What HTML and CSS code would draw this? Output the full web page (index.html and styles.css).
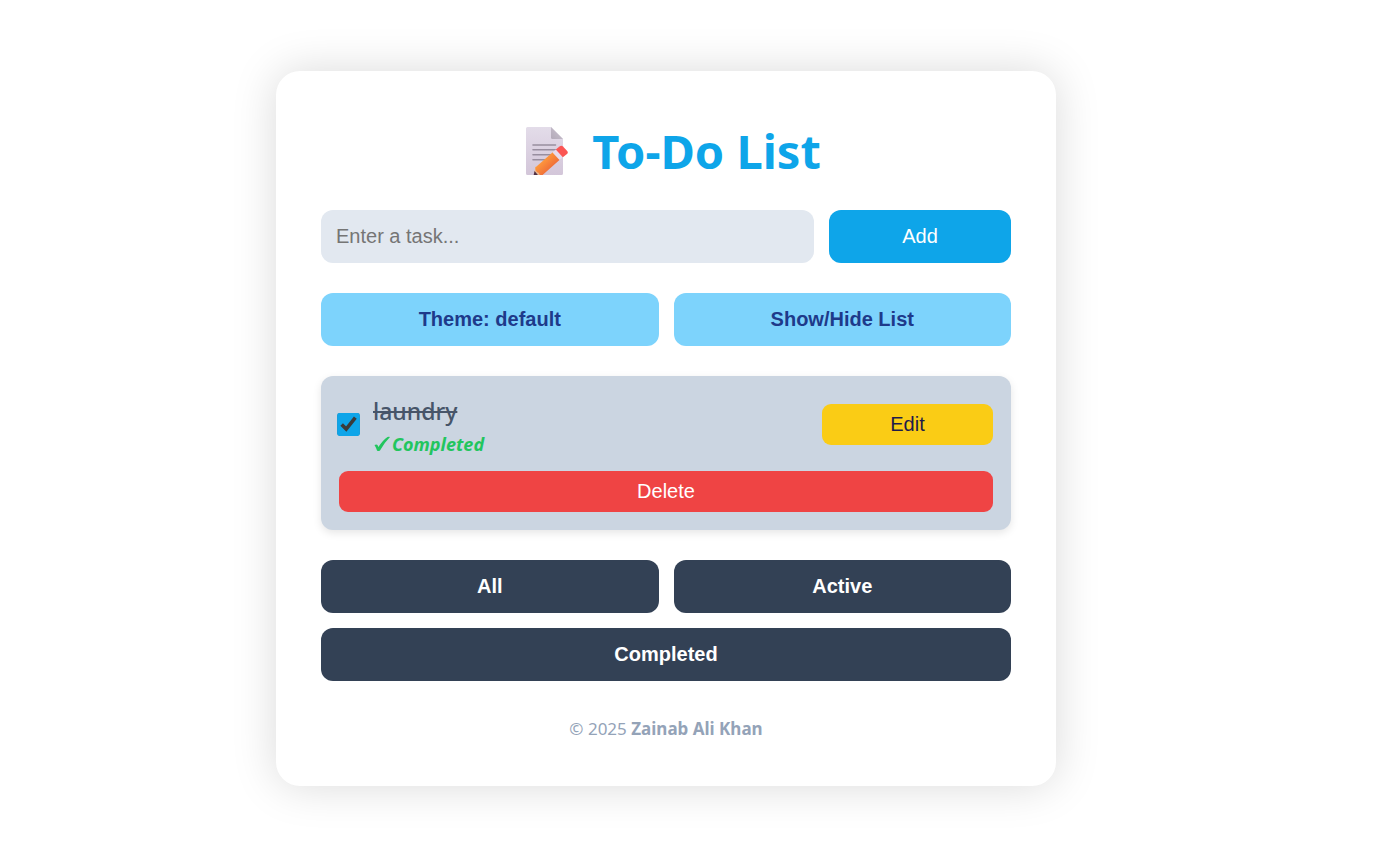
FILE: index.html
```html
<!DOCTYPE html>
<html lang="en">
<head>
<meta charset="utf-8">
<meta name="viewport" content="width=device-width, initial-scale=1">
<title>To-Do List</title>
<link rel="stylesheet" href="styles.css">
</head>
<body>
<main class="card">
  <h1 class="title">
    <svg class="title-icon" viewBox="0 0 42 48" aria-hidden="true">
      <defs>
        <linearGradient id="paper" x1="0" y1="0" x2="0" y2="1"><stop offset="0" stop-color="#e3dce9"/><stop offset="1" stop-color="#d3c6d9"/></linearGradient>
        <linearGradient id="fold" x1="0" y1="1" x2="1" y2="0"><stop offset="0" stop-color="#b3aab9"/><stop offset="1" stop-color="#cdc5d1"/></linearGradient>
        <linearGradient id="pencil" x1="0.300" y1="0.300" x2="0.700" y2="0.700"><stop offset="0" stop-color="#ff9b3d"/><stop offset="1" stop-color="#ee6a38"/></linearGradient>
        <clipPath id="sheet"><rect width="42" height="48"/></clipPath>
      </defs>
      <path d="M1.500 0H25l12 12v34.500a1.500 1.500 0 0 1-1.500 1.500h-34A1.500 1.500 0 0 1 0 46.500v-45A1.500 1.500 0 0 1 1.500 0z" fill="url(#paper)"/>
      <path d="M25 0l12 12H26.500A1.500 1.500 0 0 1 25 10.500z" fill="url(#fold)"/>
      <path d="M7 18h22.500M7 22.800h22.500M7 27.800h20M7 32.800h13" stroke="#988e9f" stroke-width="1.600" stroke-linecap="round"/>
      <g clip-path="url(#sheet)">
        <path d="M9.500 39.500L7.500 50h6l4-4z" fill="#eab58d"/>
        <path d="M8.500 44L7.300 50l5-1.500z" fill="#503044"/>
        <path d="M9.300 40.500L27 25l7 7.500L16 48.500q-2.500.500-3-2.500-3.500-1-3.700-5.500z" fill="url(#pencil)"/>
        <path d="M26.500 25.500l4-3.500 7 7.500-4 3.500z" fill="#e8dced"/>
        <path d="M29.800 22.600l3.700-3.200q1.900-1.500 3.500 0l4.200 4.500q1.300 1.800-.200 3.200L36.800 30.200z" fill="#fb5553"/>
      </g>
    </svg>
    <span>To-Do List</span>
  </h1>

  <form class="add-form">
    <input class="task-input" type="text" placeholder="Enter a task..." aria-label="Task">
    <button class="btn btn-add" type="button">Add</button>
  </form>

  <div class="button-row">
    <button class="btn btn-option" type="button">Theme: default</button>
    <button class="btn btn-option" type="button">Show/Hide List</button>
  </div>

  <ul class="task-list">
    <li class="task">
      <input class="task-check" type="checkbox" id="task-1" checked>
      <div class="task-body">
        <label class="task-name" for="task-1">laundry</label>
        <span class="task-status"><svg class="status-icon" viewBox="0 0 18 16" aria-hidden="true"><path d="M1.500 9q2-1 3 0l.900 2Q10 4 14.500 1q1.500-.500 2.500 0Q11 7 7 14.500q-1.800 1.200-3 0Q3 11.500 1.500 9z" fill="currentColor"/></svg>Completed</span>
      </div>
      <button class="btn-small btn-edit" type="button">Edit</button>
      <button class="btn-small btn-delete" type="button">Delete</button>
    </li>
  </ul>

  <div class="button-row">
    <button class="btn btn-filter" type="button">All</button>
    <button class="btn btn-filter" type="button">Active</button>
    <button class="btn btn-filter btn-wide" type="button">Completed</button>
  </div>

  <footer class="footer">© 2025 <strong>Zainab Ali Khan</strong></footer>
</main>
</body>
</html>
```
FILE: styles.css
```css
* {
  box-sizing: border-box;
}

body {
  margin: 0;
  min-height: 100vh;
  padding: 71px 94px 71px 30px;
  background: #fff;
  font-family: "Segoe UI", "Noto Sans", sans-serif;
}

.card {
  max-width: 780px;
  margin: 0 auto;
  padding: 45px;
  background: #fff;
  border-radius: 24px;
  box-shadow: 0 0 45px rgba(0, 0, 0, 0.15);
}

.title {
  display: flex;
  justify-content: center;
  align-items: center;
  gap: 24px;
  margin: 0 0 24px;
  padding-left: 15px;
  color: #0ea5e9;
  font-size: 47px;
  line-height: 70px;
  font-weight: 700;
}

.title-icon {
  width: 42px;
  height: 48px;
}

.add-form {
  display: flex;
  gap: 15px;
  margin-bottom: 30px;
}

.task-input,
.btn {
  height: 53px;
  border: none;
  border-radius: 12px;
  font-family: "Liberation Sans", Arial, sans-serif;
  font-size: 20px;
}

.task-input {
  flex: 1;
  min-width: 0;
  padding: 0 15px;
  background: #e2e8f0;
}

.btn-add {
  width: 182px;
  background: #0ea5e9;
  color: #fff;
}

.button-row {
  display: grid;
  grid-template-columns: 1fr 1fr;
  gap: 15px;
}

.btn-option {
  background: #7dd3fc;
  color: #1e3a8a;
  font-weight: 700;
}

.task-list {
  margin: 30px 0;
  padding: 0;
  list-style: none;
}

.task {
  display: grid;
  grid-template-columns: auto 1fr 171px;
  align-items: center;
  gap: 16px 15px;
  padding: 18px;
  background: #cbd5e1;
  border-radius: 12px;
  box-shadow: 0 3px 9px rgba(0, 0, 0, 0.1);
}

.task-check {
  width: 19px;
  height: 19px;
  margin: 0;
  transform: scale(1.2);
  accent-color: #0ea5e9;
}

.task-body {
  display: flex;
  flex-direction: column;
  gap: 4px;
}

.task-name {
  color: #475569;
  font-size: 23px;
  line-height: 35px;
  font-weight: 500;
  text-decoration: line-through;
}

.task-status {
  display: flex;
  align-items: center;
  gap: 1px;
  color: #22c55e;
  font-size: 18px;
  line-height: 22px;
  font-style: italic;
  font-weight: 700;
}

.status-icon {
  width: 18px;
  height: 16px;
}

.btn-small {
  height: 41px;
  border: none;
  border-radius: 9px;
  font-family: "Liberation Sans", Arial, sans-serif;
  font-size: 20px;
}

.btn-edit {
  background: #facc15;
  color: #1e1b4b;
}

.btn-delete {
  grid-column: 1 / -1;
  background: #ef4444;
  color: #fff;
}

.btn-filter {
  background: #334155;
  color: #fff;
  font-weight: 700;
}

.btn-wide {
  grid-column: 1 / -1;
}

.footer {
  margin-top: 36px;
  color: #94a3b8;
  font-size: 17px;
  line-height: 24px;
  text-align: center;
}
```
